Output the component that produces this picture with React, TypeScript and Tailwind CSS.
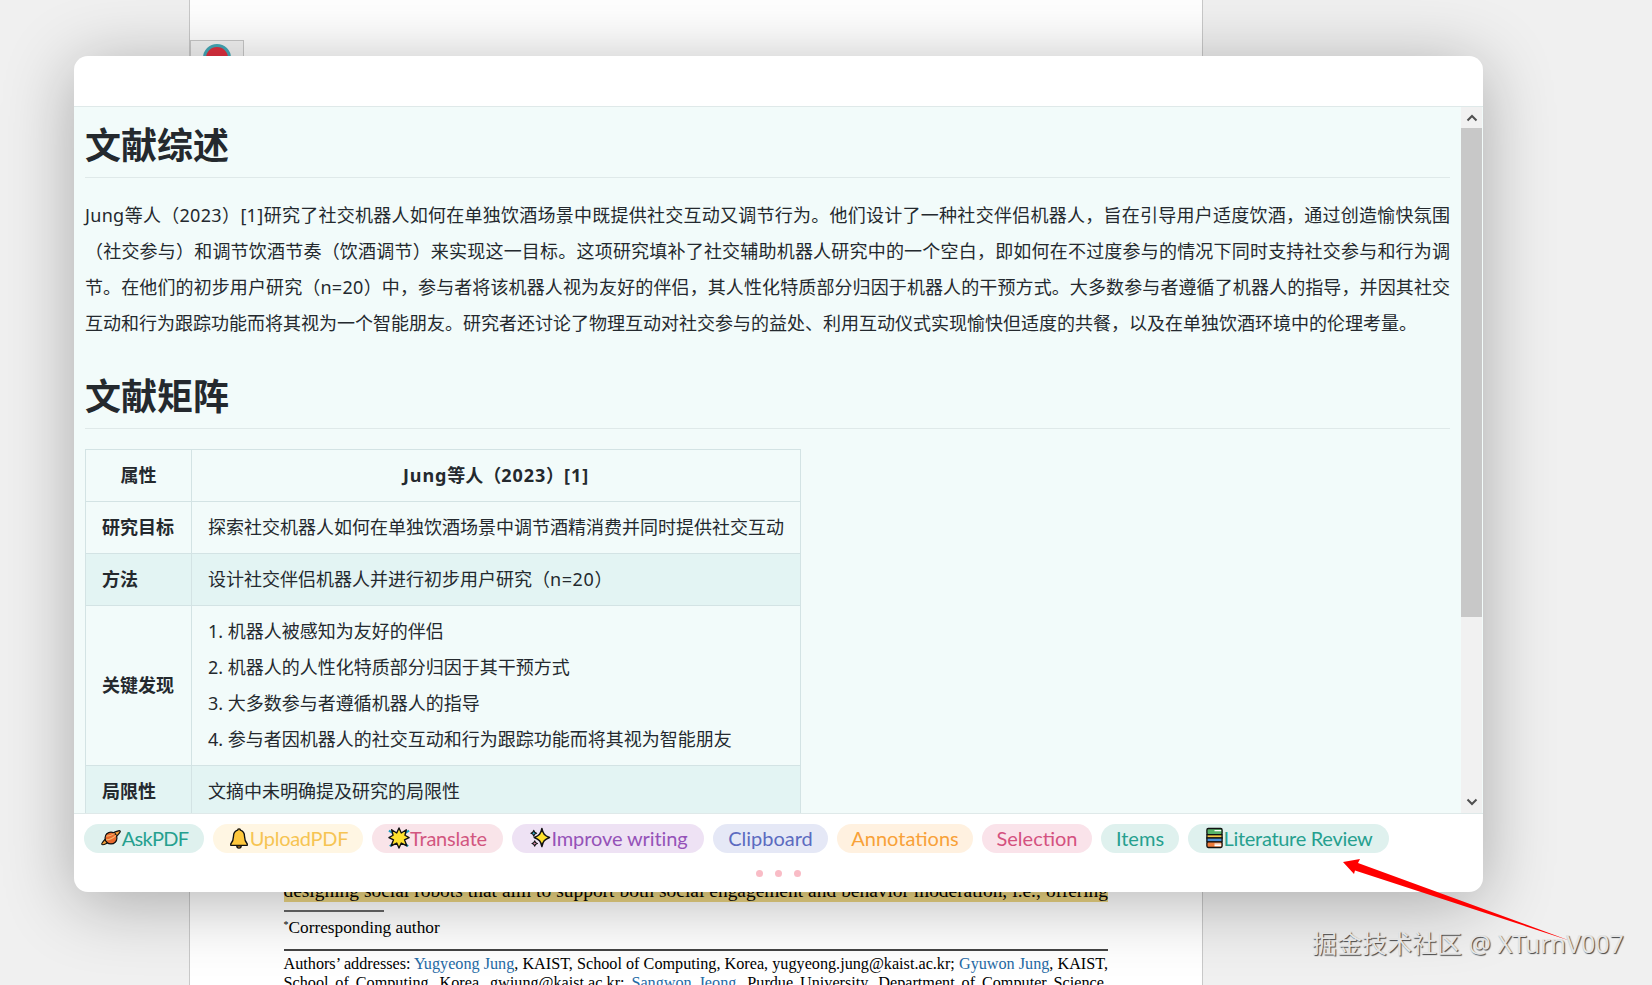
const cjk = "font-['Noto_Sans','Noto_Sans_CJK_SC',sans-serif]";

function Planet() {
  return (
    <svg viewBox="0 0 24 24" className="w-[22px] h-[22px] shrink-0">
      <path d="M2 19c-1-1 2-4 5-7 4-4 9-7 14-8 2 0 1 2-1 4-3 4-8 8-13 10-2 1-4 2-5 1z" fill="#f2a03a" stroke="#111" strokeWidth="1.3" />
      <circle cx="12" cy="12" r="6.5" fill="#e8692c" stroke="#111" strokeWidth="1.3" />
      <path d="M7 10c3 0 6-1 9-3M6.500 14c4 0 8-2 11-5" stroke="#f7b267" strokeWidth="1.2" fill="none" />
    </svg>
  );
}

function Bell() {
  return (
    <svg viewBox="0 0 24 24" className="w-[22px] h-[24px] shrink-0">
      <path d="M12 2c-1 0-1.500.7-1.500 1.500C7.500 4.500 6 7 6 10c0 4-1 6-3 8.500V20h18v-1.500C19 16 18 14 18 10c0-3-1.500-5.500-4.500-6.500C13.500 2.700 13 2 12 2z" fill="#ffc83d" stroke="#111" strokeWidth="1.5" strokeLinejoin="round" />
      <path d="M9.500 20.500a2.500 2.500 0 0 0 5 0z" fill="#f29b1d" stroke="#111" strokeWidth="1.3" />
    </svg>
  );
}

function Burst() {
  return (
    <svg viewBox="0 0 24 24" className="w-[22px] h-[22px] shrink-0">
      <path d="M1 4l5 3M23 4l-5 3M2 21l5-4M22 21l-5-4" stroke="#1e9fc2" strokeWidth="2.4" />
      <path d="M12 1l2.500 5.500L20 3l-1.500 6L23 11.500l-5 2.500 2.500 6.500-6-3L12 23l-2.500-5.500-6 3L6 14l-5-2.500L5.500 9 4 3l5.500 3.500z" fill="#ffe12e" stroke="#111" strokeWidth="1.5" strokeLinejoin="round" />
    </svg>
  );
}

function Sparkles() {
  return (
    <svg viewBox="0 0 24 24" className="w-[23px] h-[24px] shrink-0">
      <path d="M14.500 2c1 5.500 2.800 7.500 8 9.500-5.200 2-7 4-8 9.500-1-5.500-2.800-7.500-8-9.500 5.200-2 7-4 8-9.500z" fill="#ffe12e" stroke="#111" strokeWidth="1.5" strokeLinejoin="round" />
      <path d="M6 4c.4 2 1 2.600 3 3-2 .4-2.600 1-3 3-.4-2-1-2.600-3-3 2-.4 2.600-1 3-3z" fill="#29b6d8" stroke="#111" strokeWidth="1.2" strokeLinejoin="round" />
      <path d="M7 15c.4 1.800 1 2.400 2.800 2.800C8 18.200 7.400 18.800 7 20.600c-.4-1.800-1-2.400-2.800-2.800C6 17.400 6.600 16.800 7 15z" fill="#e58bb3" stroke="#111" strokeWidth="1.2" strokeLinejoin="round" />
    </svg>
  );
}

function Books() {
  return (
    <svg viewBox="0 0 20 24" className="w-[19px] h-[24px] shrink-0">
      <rect x="2" y="2" width="16" height="6.500" rx="1.500" fill="#58b368" stroke="#111" strokeWidth="1.400" />
      <rect x="2" y="8.500" width="16" height="3.500" fill="#f6c945" stroke="#111" strokeWidth="1.400" />
      <rect x="2" y="12" width="16" height="4" fill="#4a90d9" stroke="#111" strokeWidth="1.400" />
      <rect x="2" y="16" width="16" height="6" rx="1.500" fill="#ef7d3c" stroke="#111" strokeWidth="1.400" />
      <path d="M10 4.200h7M10 18.500h7M10 20h7" stroke="#fff" strokeWidth="1.400" />
    </svg>
  );
}

const pills = [
  { label: 'AskPDF', cls: 'bg-[#dff1ee] text-[#26a08f] w-[120px] tracking-[-0.7px]', icon: <Planet /> },
  { label: 'UploadPDF', cls: 'bg-[#fff6e3] text-[#f6c453] w-[150px] tracking-[-0.3px]', icon: <Bell /> },
  { label: 'Translate', cls: 'bg-[#f9e4e9] text-[#d2567f] w-[131px] tracking-[-0.2px]', icon: <Burst /> },
  { label: 'Improve writing', cls: 'bg-[#eee2f4] text-[#9552b8] w-[192px] tracking-[-0.1px]', icon: <Sparkles /> },
  { label: 'Clipboard', cls: 'bg-[#e5e8f6] text-[#5c6bc0] w-[115px]' },
  { label: 'Annotations', cls: 'bg-[#fff1e0] text-[#f8a138] w-[136px]' },
  { label: 'Selection', cls: 'bg-[#fae3ea] text-[#d4517f] w-[110px]' },
  { label: 'Items', cls: 'bg-[#dff1ee] text-[#26a08f] w-[78px]' },
  { label: 'Literature Review', cls: 'bg-[#dff1ee] text-[#26a08f] w-[201px] tracking-[-0.3px]', icon: <Books /> },
];

// Latin runs sit a bit wider in the reference than in Noto Sans
function L({ children }: { children: React.ReactNode }) {
  return <span className="tracking-[0.3px]">{children}</span>;
}

const cell = 'border border-[#d3e3e4] px-[16px] pt-[7px] pb-[8px]';

const findings = [
  '1. 机器人被感知为友好的伴侣',
  '2. 机器人的人性化特质部分归因于其干预方式',
  '3. 大多数参与者遵循机器人的指导',
  '4. 参与者因机器人的社交互动和行为跟踪功能而将其视为智能朋友',
];

export default function App() {
  return (
    <div className={`relative w-[1652px] h-[985px] overflow-hidden bg-[#f0f0f0] ${cjk}`}>
      {/* PDF page behind the dialog */}
      <div className="ml-[188.5px] w-[1014.5px] h-full bg-white border-x border-[#c9c9c9] pt-[40px]">
        <div className="w-[54px] h-[30px] border border-[#c9c9c9] bg-[#f4f4f4] flex justify-center pt-[3px]">
          <div className="w-[28px] h-[28px] rounded-full border-[3px] border-[#45a9b8] bg-[#e0303f]" />
        </div>
        <div className="mt-[810px] mx-[94px] font-['Liberation_Serif',serif] text-black">
          <div className="bg-[#ecd684] text-[19.4px] leading-[22px] h-[22px] whitespace-nowrap [text-align-last:justify]">
            designing social robots that aim to support both social engagement and behavior moderation, i.e., offering
          </div>
          <div className="mt-[8px] w-[100px] h-[2px] bg-[#666]" />
          <div className="mt-[6px] text-[17.3px] leading-[20px]">
            <sup className="text-[10px]">*</sup>Corresponding author
          </div>
          <div className="mt-[11px] h-[1.5px] bg-[#444]" />
          <div className="mt-[4px] text-[16.2px] leading-[19px] whitespace-nowrap [text-align-last:justify]">
            Authors’ addresses: <span className="text-[#1f6aa5]">Yugyeong Jung</span>, KAIST, School of Computing, Korea, yugyeong.jung@kaist.ac.kr; <span className="text-[#1f6aa5]">Gyuwon Jung</span>, KAIST,
          </div>
          <div className="text-[16.2px] leading-[19px] whitespace-nowrap [text-align-last:justify]">
            School of Computing, Korea, gwjung@kaist.ac.kr; <span className="text-[#1f6aa5]">Sangwon Jeong</span>, Purdue University, Department of Computer Science,
          </div>
        </div>
      </div>

      {/* Dialog */}
      <div className="absolute left-[74px] top-[56px] w-[1409px] h-[836px] flex flex-col rounded-[14px] overflow-hidden bg-white shadow-[0_10px_70px_rgba(0,0,0,0.3)]">
        <div className="h-[51px] shrink-0 border-b border-[#dfe9e9]" />

        <div className="flex flex-1 min-h-0 bg-[#f2fbfa] border-b border-[#dfe9e9]">
          <div className="flex-1 min-w-0 overflow-hidden pl-[11px] pr-[11px] text-[18px] leading-[36px] text-[#24292e]">
            <h1 className="mt-[15px] pb-[9px] h-[56px] text-[36px] leading-[48px] font-bold border-b border-[#dfe9e9]">文献综述</h1>
            <div className="mt-[19px]">
              <div className="whitespace-nowrap [text-align-last:justify]">
                <L>Jung</L>等人（<L>2023</L>）<L>[1]</L>研究了社交机器人如何在单独饮酒场景中既提供社交互动又调节行为。他们设计了一种社交伴侣机器人，旨在引导用户适度饮酒，通过创造愉快氛围
              </div>
              <div className="whitespace-nowrap [text-align-last:justify]">
                （社交参与）和调节饮酒节奏（饮酒调节）来实现这一目标。这项研究填补了社交辅助机器人研究中的一个空白，即如何在不过度参与的情况下同时支持社交参与和行为调
              </div>
              <div className="whitespace-nowrap [text-align-last:justify]">
                节。在他们的初步用户研究（<L>n=20</L>）中，参与者将该机器人视为友好的伴侣，其人性化特质部分归因于机器人的干预方式。大多数参与者遵循了机器人的指导，并因其社交
              </div>
              <div className="whitespace-nowrap">互动和行为跟踪功能而将其视为一个智能朋友。研究者还讨论了物理互动对社交参与的益处、利用互动仪式实现愉快但适度的共餐，以及在单独饮酒环境中的伦理考量。</div>
            </div>
            <h1 className="mt-[32px] pb-[9px] h-[56px] text-[36px] leading-[48px] font-bold border-b border-[#dfe9e9]">文献矩阵</h1>
            <table className="mt-[20px] border-collapse">
              <tbody>
                <tr>
                  <th className={`${cell} w-[106px] font-bold`}>属性</th>
                  <th className={`${cell} font-bold`}><span className="tracking-[0.9px]">Jung</span>等人（<span className="tracking-[0.9px]">2023</span>）<span className="tracking-[0.9px]">[1]</span></th>
                </tr>
                <tr>
                  <td className={`${cell} font-bold`}>研究目标</td>
                  <td className={cell}>探索社交机器人如何在单独饮酒场景中调节酒精消费并同时提供社交互动</td>
                </tr>
                <tr className="bg-[#e3f4f3]">
                  <td className={`${cell} font-bold`}>方法</td>
                  <td className={cell}>设计社交伴侣机器人并进行初步用户研究（<span className="tracking-[0.6px]">n=20</span>）</td>
                </tr>
                <tr>
                  <td className={`${cell} font-bold`}>关键发现</td>
                  <td className={cell}>
                    {findings.map((f) => (
                      <div key={f}>{f}</div>
                    ))}
                  </td>
                </tr>
                <tr className="bg-[#e3f4f3]">
                  <td className={`${cell} font-bold`}>局限性</td>
                  <td className={cell}>文摘中未明确提及研究的局限性</td>
                </tr>
              </tbody>
            </table>
          </div>

          {/* Scrollbar */}
          <div className="w-[21px] mr-[1px] shrink-0 flex flex-col bg-[#f1f1f1]">
            <div className="h-[21px] flex items-center justify-center">
              <svg viewBox="0 0 12 8" className="w-[12px] h-[8px]">
                <path d="M1.500 6.500L6 2l4.500 4.500" fill="none" stroke="#505050" strokeWidth="2" />
              </svg>
            </div>
            <div className="h-[489px] bg-[#c8c8c8]" />
            <div className="flex-1" />
            <div className="h-[22px] flex items-center justify-center">
              <svg viewBox="0 0 12 8" className="w-[12px] h-[8px]">
                <path d="M1.500 1.500L6 6l4.500-4.500" fill="none" stroke="#505050" strokeWidth="2" />
              </svg>
            </div>
          </div>
        </div>

        <div className="h-[78px] shrink-0 pt-[10px]">
          <div className="flex gap-[9px] pl-[10px]">
            {pills.map((p) => (
              <div key={p.label} className={`h-[29px] pb-[1px] rounded-full flex items-center justify-center text-[20px] leading-[28px] whitespace-nowrap font-['Lato',sans-serif] ${p.cls}`}>
                {p.icon}
                {p.label}
              </div>
            ))}
          </div>
          <div className="mt-[17px] flex justify-center gap-[12px]">
            <span className="w-[7px] h-[7px] rounded-full bg-[#f9bcc6]" />
            <span className="w-[7px] h-[7px] rounded-full bg-[#f9bcc6]" />
            <span className="w-[7px] h-[7px] rounded-full bg-[#f9bcc6]" />
          </div>
        </div>
      </div>

      {/* Annotation arrow */}
      <svg viewBox="0 0 1652 985" className="absolute inset-0 w-[1652px] h-[985px] pointer-events-none">
        <path d="M1343 862L1360 859L1358 863L1570 940.700L1355 870.500L1354 874Z" fill="#ff0000" />
      </svg>

      {/* Watermark */}
      <div className="absolute left-[1312px] top-[925px] whitespace-nowrap text-[25px] leading-[36px] text-[#e4e4e4] [text-shadow:1px_1px_1px_#444]">
        掘金技术社区 @ XTurnV007
      </div>
    </div>
  );
}
